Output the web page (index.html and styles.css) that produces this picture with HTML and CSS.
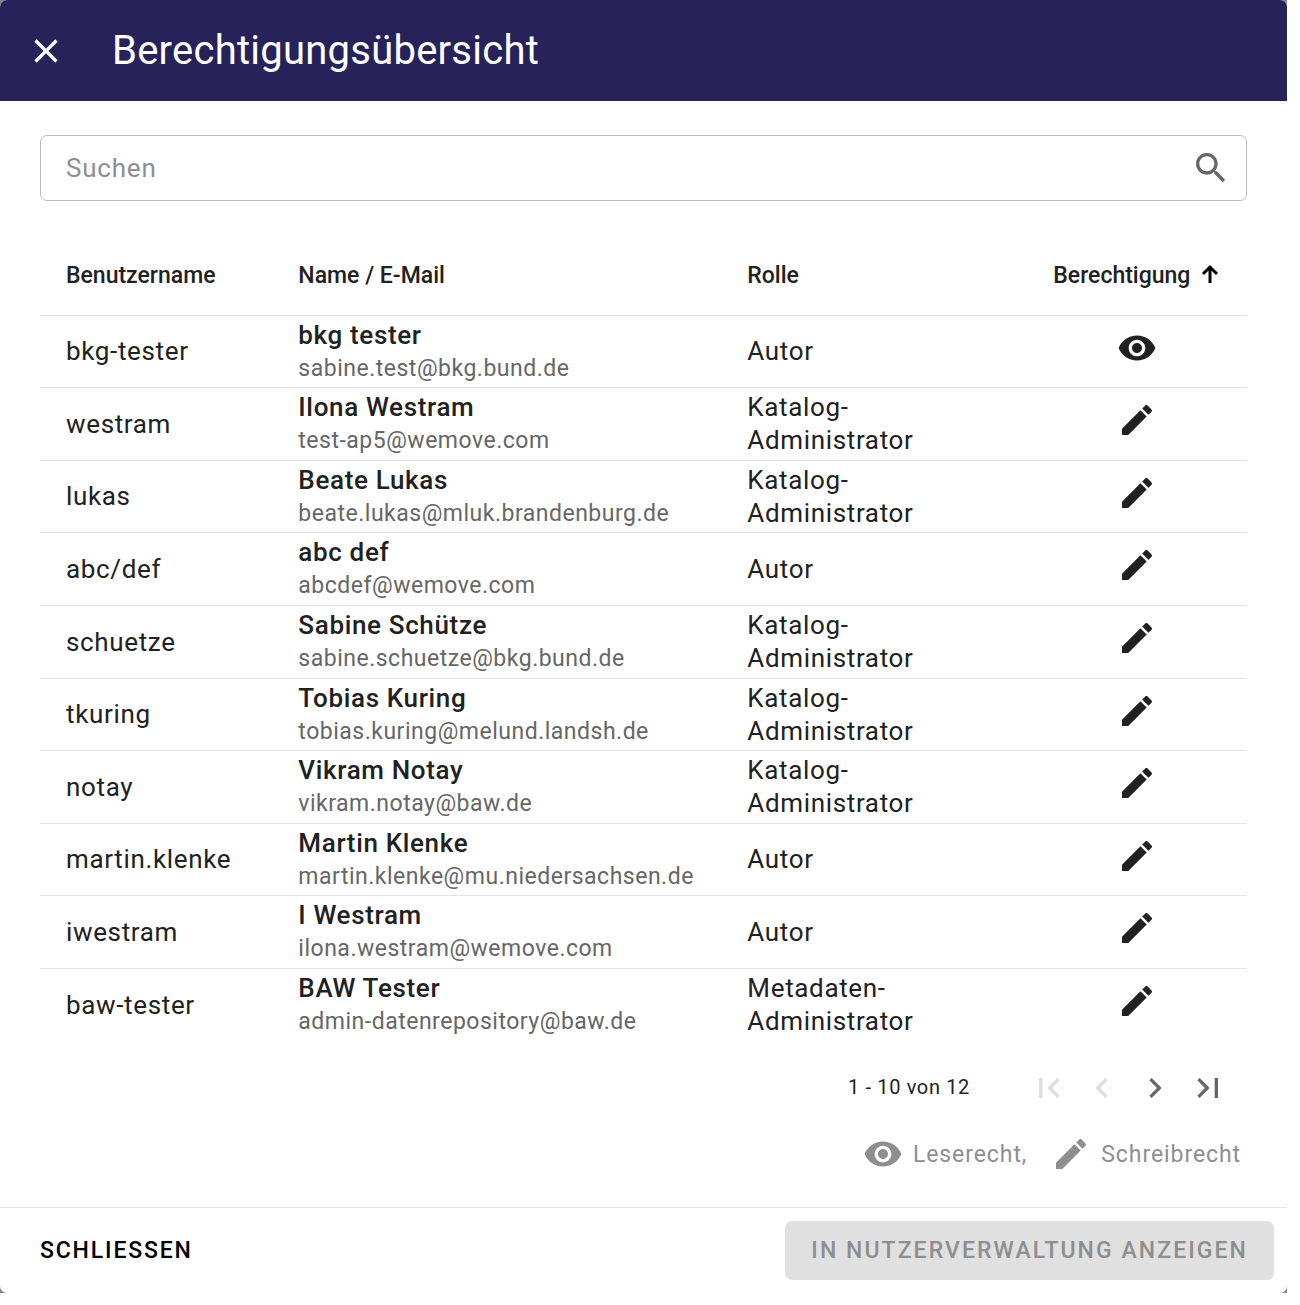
FILE: index.html
```html
<!DOCTYPE html>
<html lang="de">
<head>
<meta charset="utf-8">
<meta name="viewport" content="width=device-width, initial-scale=1">
<title>Berechtigungsübersicht</title>
<link rel="stylesheet" href="styles.css">
</head>
<body>
<svg class="sprite" aria-hidden="true">
  <symbol id="eye" viewBox="0 0 24 24"><path d="M12 4.5C7 4.5 2.73 7.61 1 12c1.73 4.39 6 7.5 11 7.5s9.27-3.11 11-7.5c-1.73-4.39-6-7.5-11-7.5zM12 17c-2.76 0-5-2.24-5-5s2.24-5 5-5 5 2.24 5 5-2.24 5-5 5zm0-8c-1.66 0-3 1.34-3 3s1.34 3 3 3 3-1.34 3-3-1.34-3-3-3z"/></symbol>
  <symbol id="pencil" viewBox="0 0 24 24"><path d="M3 17.25V21h3.75L17.81 9.94l-3.75-3.75L3 17.25zM20.71 7.04c.39-.39.39-1.02 0-1.41l-2.34-2.34c-.39-.39-1.02-.39-1.41 0l-1.83 1.83 3.75 3.75 1.83-1.83z"/></symbol>
</svg>
<div class="backdrop">
<main class="dialog" role="dialog" aria-labelledby="dialog-title">
  <header class="toolbar">
    <button class="icon-button close" type="button" aria-label="Dialog schließen"><svg class="icon" viewBox="0 0 24 24"><path d="M19 6.41L17.59 5 12 10.59 6.41 5 5 6.41 10.59 12 5 17.59 6.41 19 12 13.41 17.59 19 19 17.59 13.41 12z"/></svg></button>
    <h1 class="title" id="dialog-title">Berechtigungsübersicht</h1>
  </header>

  <section class="content">
    <label class="search">
      <input class="search-input" type="text" placeholder="Suchen" aria-label="Suchen">
      <svg class="icon search-icon" viewBox="0 0 24 24"><path d="M15.5 14h-.79l-.28-.27C15.41 12.59 16 11.11 16 9.5 16 5.91 13.09 3 9.5 3S3 5.91 3 9.5 5.91 16 9.5 16c1.61 0 3.09-.59 4.23-1.57l.27.28v.79l5 4.99L20.49 19l-4.99-5zm-6 0C7.01 14 5 11.99 5 9.5S7.01 5 9.5 5 14 7.01 14 9.5 11.99 14 9.5 14z"/></svg>
    </label>

    <table class="users">
      <colgroup><col class="col-user"><col class="col-name"><col class="col-role"><col class="col-right"></colgroup>
      <thead>
        <tr>
          <th scope="col">Benutzername</th>
          <th scope="col">Name / E-Mail</th>
          <th scope="col">Rolle</th>
          <th scope="col" aria-sort="ascending"><button class="sort" type="button">Berechtigung<svg class="sort-arrow" viewBox="0 0 20 20"><path d="M10 17V1.500M3 8L10 1L17 8"/></svg></button></th>
        </tr>
      </thead>
      <tbody>
        <tr><td>bkg-tester</td><td><span class="name">bkg tester</span><span class="mail">sabine.test@bkg.bund.de</span></td><td>Autor</td><td class="right"><svg class="icon" role="img" aria-label="Leserecht"><use href="#eye"/></svg></td></tr>
        <tr><td>westram</td><td><span class="name">Ilona Westram</span><span class="mail">test-ap5@wemove.com</span></td><td>Katalog-Administrator</td><td class="right"><svg class="icon" role="img" aria-label="Schreibrecht"><use href="#pencil"/></svg></td></tr>
        <tr><td>lukas</td><td><span class="name">Beate Lukas</span><span class="mail">beate.lukas@mluk.brandenburg.de</span></td><td>Katalog-Administrator</td><td class="right"><svg class="icon" role="img" aria-label="Schreibrecht"><use href="#pencil"/></svg></td></tr>
        <tr><td>abc/def</td><td><span class="name">abc def</span><span class="mail">abcdef@wemove.com</span></td><td>Autor</td><td class="right"><svg class="icon" role="img" aria-label="Schreibrecht"><use href="#pencil"/></svg></td></tr>
        <tr><td>schuetze</td><td><span class="name">Sabine Schütze</span><span class="mail">sabine.schuetze@bkg.bund.de</span></td><td>Katalog-Administrator</td><td class="right"><svg class="icon" role="img" aria-label="Schreibrecht"><use href="#pencil"/></svg></td></tr>
        <tr><td>tkuring</td><td><span class="name">Tobias Kuring</span><span class="mail">tobias.kuring@melund.landsh.de</span></td><td>Katalog-Administrator</td><td class="right"><svg class="icon" role="img" aria-label="Schreibrecht"><use href="#pencil"/></svg></td></tr>
        <tr><td>notay</td><td><span class="name">Vikram Notay</span><span class="mail">vikram.notay@baw.de</span></td><td>Katalog-Administrator</td><td class="right"><svg class="icon" role="img" aria-label="Schreibrecht"><use href="#pencil"/></svg></td></tr>
        <tr><td>martin.klenke</td><td><span class="name">Martin Klenke</span><span class="mail">martin.klenke@mu.niedersachsen.de</span></td><td>Autor</td><td class="right"><svg class="icon" role="img" aria-label="Schreibrecht"><use href="#pencil"/></svg></td></tr>
        <tr><td>iwestram</td><td><span class="name">I Westram</span><span class="mail">ilona.westram@wemove.com</span></td><td>Autor</td><td class="right"><svg class="icon" role="img" aria-label="Schreibrecht"><use href="#pencil"/></svg></td></tr>
        <tr><td>baw-tester</td><td><span class="name">BAW Tester</span><span class="mail">admin-datenrepository@baw.de</span></td><td>Metadaten-Administrator</td><td class="right"><svg class="icon" role="img" aria-label="Schreibrecht"><use href="#pencil"/></svg></td></tr>
      </tbody>
    </table>

    <nav class="paginator" aria-label="Seiten">
      <span class="range">1 - 10 von 12</span>
      <button class="icon-button" type="button" disabled aria-label="Erste Seite"><svg class="icon" viewBox="0 0 24 24"><path d="M18.41 16.59L13.82 12l4.59-4.59L17 6l-6 6 6 6zM6 6h2v12H6z"/></svg></button>
      <button class="icon-button" type="button" disabled aria-label="Vorherige Seite"><svg class="icon" viewBox="0 0 24 24"><path d="M15.41 7.41L14 6l-6 6 6 6 1.41-1.41L10.83 12z"/></svg></button>
      <button class="icon-button" type="button" aria-label="Nächste Seite"><svg class="icon" viewBox="0 0 24 24"><path d="M10 6L8.59 7.41 13.17 12l-4.58 4.59L10 18l6-6z"/></svg></button>
      <button class="icon-button" type="button" aria-label="Letzte Seite"><svg class="icon" viewBox="0 0 24 24"><path d="M5.59 7.41L10.18 12l-4.59 4.59L7 18l6-6-6-6zM16 6h2v12h-2z"/></svg></button>
    </nav>

    <div class="legend">
      <span class="legend-item"><svg class="icon"><use href="#eye"/></svg>Leserecht,</span>
      <span class="legend-item"><svg class="icon"><use href="#pencil"/></svg>Schreibrecht</span>
    </div>
  </section>

  <footer class="actions">
    <button class="button button-text" type="button">SCHLIESSEN</button>
    <button class="button button-flat" type="button" disabled>IN NUTZERVERWALTUNG ANZEIGEN</button>
  </footer>
</main>
</div>
</body>
</html>
```
FILE: styles.css
```css
* {
  box-sizing: border-box;
}

body {
  margin: 0;
  padding: 0 13px 12px 0;
  background: #fff;
  color: #212121;
  font-family: Roboto, "Liberation Sans", sans-serif;
  font-size: 26px;
  line-height: 33px;
  letter-spacing: 0.025em;
}

button {
  padding: 0;
  border: 0;
  background: none;
  color: inherit;
  font: inherit;
  letter-spacing: inherit;
}

.sprite {
  display: none;
}

.icon {
  display: block;
  flex: none;
  width: 40px;
  height: 40px;
  fill: currentColor;
}

.icon-button {
  display: flex;
  flex: none;
  align-items: center;
  justify-content: center;
  width: 53px;
  height: 53px;
}

.backdrop {
  background: #858585;
}

.dialog {
  overflow: hidden;
  border-radius: 7px;
  background: #fff;
}

.toolbar {
  display: flex;
  align-items: center;
  gap: 40px;
  height: 101px;
  padding: 0 19px;
  background: #28225a;
  color: #fff;
}

.title {
  margin: 0;
  font-size: 40px;
  font-weight: 400;
  line-height: 53px;
  letter-spacing: 0.006em;
}

.content {
  padding: 34px 40px 33px;
}

.search {
  display: flex;
  align-items: center;
  height: 66px;
  padding: 0 15px 0 25px;
  border: 1px solid #bdbdbd;
  border-radius: 7px;
}

.search-input {
  flex: 1;
  min-width: 0;
  padding: 0;
  border: 0;
  outline: 0;
  background: none;
  color: inherit;
  font: inherit;
  letter-spacing: 0.03em;
}

.search-input::placeholder {
  color: #8e8e8e;
  opacity: 1;
}

.search-icon {
  color: #666;
}

.users {
  width: 100%;
  margin-top: 33px;
  border-spacing: 0;
  table-layout: fixed;
}

.col-user { width: 19.25%; }
.col-name { width: 37.2%; }
.col-role { width: 25.35%; }
.col-right { width: 18.2%; }

.users th,
.users td {
  padding: 0 26px;
  border-bottom: 1px solid #e3e3e3;
  text-align: left;
  vertical-align: middle;
}

.users th {
  height: 82px;
  padding-top: 2px;
  font-size: 23px;
  font-weight: 500;
  letter-spacing: normal;
  white-space: nowrap;
}

.users td {
  height: 72px;
}

/* Four rows in every seven are a pixel taller: an average pitch of 72.57px. */
.users tr:nth-child(7n) td,
.users tr:nth-child(7n + 2) td,
.users tr:nth-child(7n + 4) td,
.users tr:nth-child(7n + 5) td {
  height: 73px;
}

.users tbody tr:last-child td {
  border-bottom: 0;
}

.users .right {
  padding-bottom: 8px;
}

.right .icon {
  margin: 0 auto;
}

.sort {
  display: flex;
  align-items: center;
  gap: 10px;
}

.sort-arrow {
  width: 20px;
  height: 20px;
  fill: none;
  stroke: #000;
  stroke-width: 3;
  overflow: visible;
}

.name,
.mail {
  display: block;
}

.name {
  font-weight: 500;
}

.mail {
  color: #666;
  font-size: 23px;
  letter-spacing: 0.022em;
}

.paginator {
  display: flex;
  align-items: center;
  justify-content: flex-end;
  margin-top: 20px;
  padding-right: 13px;
  color: #666;
}

.paginator .icon-button:disabled {
  color: #dedede;
}

.range {
  margin-right: 52px;
  color: #212121;
  font-size: 20px;
}

.legend {
  display: flex;
  justify-content: flex-end;
  gap: 24px;
  margin-top: 20px;
  padding-right: 6px;
  color: #8e8e8e;
  font-size: 23px;
  letter-spacing: 0.04em;
}

.legend-item {
  display: flex;
  align-items: center;
  gap: 10px;
}

.actions {
  display: flex;
  align-items: center;
  justify-content: space-between;
  padding: 13px 13px 13px 40px;
  border-top: 1px solid #e3e3e3;
}

.button {
  height: 59px;
  border-radius: 7px;
  font-size: 23px;
  font-weight: 500;
  letter-spacing: 0.09em;
}

.button-text {
  color: #000;
  letter-spacing: 0.08em;
}

.button-flat {
  padding: 0 26px;
  background: #e0e0e0;
  color: #8e8e8e;
}
```
